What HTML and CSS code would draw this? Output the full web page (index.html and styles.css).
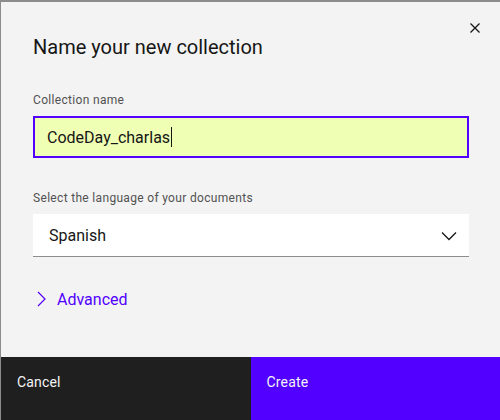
FILE: index.html
```html
<!DOCTYPE html>
<html>
<head>
<meta charset="utf-8">
<link rel="stylesheet" href="styles.css">
</head>
<body>
<div class="frame">
  <div class="modal">
    <div class="body">
      <button class="close" aria-label="Close">
        <svg width="16" height="16" viewBox="0 0 16 16"><path d="M3.5 3.5l9 9M12.5 3.5l-9 9" stroke="#161616" stroke-width="1.3" fill="none"/></svg>
      </button>
      <h2 class="title">Name your new collection</h2>
      <div class="field">
        <label class="label">Collection name</label>
        <div class="input"><span class="value">CodeDay_charlas</span><span class="caret"></span></div>
      </div>
      <div class="field">
        <label class="label">Select the language of your documents</label>
        <div class="select">
          <span class="value">Spanish</span>
          <svg class="chev" width="16" height="10" viewBox="0 0 16 10"><path d="M1 1.5l7 7 7-7" stroke="#161616" stroke-width="1.3" fill="none"/></svg>
        </div>
      </div>
      <div class="advanced">
        <svg width="10" height="16" viewBox="0 0 10 16"><path d="M2 1l7 7-7 7" stroke="#5200ff" stroke-width="1.2" fill="none"/></svg>
        <span>Advanced</span>
      </div>
    </div>
    <div class="footer">
      <button class="btn cancel">Cancel</button>
      <button class="btn create">Create</button>
    </div>
  </div>
</div>
</body>
</html>
```
FILE: styles.css
```css
* { box-sizing: border-box; }
html, body { margin: 0; padding: 0; }
body {
  width: 500px;
  height: 420px;
  overflow: hidden;
  font-family: Roboto, "Noto Sans", sans-serif;
  background: #8c8c8c;
}
.frame {
  padding: 2px 0 0 1px;
  height: 420px;
}
.modal {
  height: 418px;
  background: #f3f3f3;
  display: flex;
  flex-direction: column;
}
.body {
  position: relative;
  flex: 1;
  padding: 0 31px 0 32px;
}
.close {
  position: absolute;
  top: 18px;
  right: 17px;
  width: 16px;
  height: 16px;
  padding: 0;
  border: 0;
  background: none;
  display: flex;
}
.title {
  margin: 0;
  padding-top: 32px;
  font-size: 20px;
  font-weight: 400;
  line-height: 26px;
  color: #161616;
}
.field { margin-top: 32px; }
.label {
  display: block;
  font-size: 12px;
  line-height: 16px;
  color: #525252;
  letter-spacing: 0.32px;
  margin-bottom: 8px;
}
.input {
  height: 42px;
  background: #efffb4;
  border: 2px solid #5200ff;
  display: flex;
  align-items: center;
  padding-left: 12px;
  font-size: 16px;
  color: #161616;
}
.caret {
  display: inline-block;
  width: 1px;
  height: 20px;
  background: #161616;
  margin-left: 1px;
}
.select {
  height: 43px;
  background: #ffffff;
  border-bottom: 1px solid #8d8d8d;
  display: flex;
  align-items: center;
  justify-content: space-between;
  padding: 0 12px 0 16px;
  font-size: 16px;
  color: #161616;
}
.chev { margin-top: 2px; }
.advanced {
  margin-top: 31px;
  height: 22px;
  display: flex;
  align-items: center;
  gap: 11px;
  padding-left: 3px;
  color: #5200ff;
  font-size: 16px;
}
.footer {
  display: flex;
  height: 63px;
}
.btn {
  flex: 1;
  border: 0;
  margin: 0;
  font-family: inherit;
  font-size: 14px;
  line-height: 18px;
  text-align: left;
  padding: 16px 16px 0;
  display: flex;
  align-items: flex-start;
  color: #f4f4f4;
  letter-spacing: 0.16px;
}
.cancel { background: #1f1f1f; }
.create { background: #5200ff; }
```
